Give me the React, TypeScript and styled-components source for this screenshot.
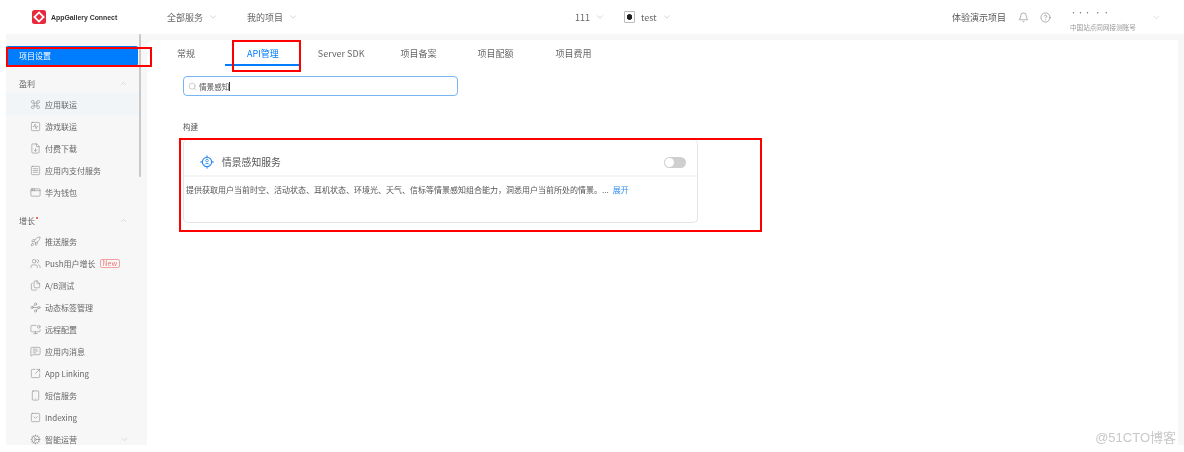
import React from 'react';
import styled, { createGlobalStyle } from 'styled-components';
import {
  AppWindow,
  Bell,
  ChevronDown,
  ChevronUp,
  CircleHelp,
  Command,
  Files,
  FileDown,
  LucideIcon,
  MessageSquareText,
  MonitorDot,
  Rocket,
  Search,
  Smartphone,
  SquareActivity,
  SquareArrowOutUpRight,
  SquareChevronDown,
  SquareMenu,
  Users,
  Waypoints,
  Cog,
} from 'lucide-react';

const FONT = `'Noto Sans CJK SC', 'Noto Sans', sans-serif`;

const GlobalStyle = createGlobalStyle`
  html, body {
    margin: 0;
    padding: 0;
    background: #fff;
    overflow: hidden;
  }
  body {
    font-family: ${FONT};
    color: #555;
  }
`;

interface NavEntry {
  icon: LucideIcon;
  label: string;
  badge?: string;
  active?: boolean;
  caret?: boolean;
}

const profitItems: NavEntry[] = [
  { icon: Command, label: '应用联运', active: true },
  { icon: SquareActivity, label: '游戏联运' },
  { icon: FileDown, label: '付费下载' },
  { icon: SquareMenu, label: '应用内支付服务' },
  { icon: AppWindow, label: '华为钱包' },
];

const growthItems: NavEntry[] = [
  { icon: Rocket, label: '推送服务' },
  { icon: Users, label: 'Push用户增长', badge: 'New' },
  { icon: Files, label: 'A/B测试' },
  { icon: Waypoints, label: '动态标签管理' },
  { icon: MonitorDot, label: '远程配置' },
  { icon: MessageSquareText, label: '应用内消息' },
  { icon: SquareArrowOutUpRight, label: 'App Linking' },
  { icon: Smartphone, label: '短信服务' },
  { icon: SquareChevronDown, label: 'Indexing' },
  { icon: Cog, label: '智能运营', caret: true },
];

const tabs = [
  { label: '常规', gap: 0 },
  { label: 'API管理', gap: 30, active: true },
  { label: 'Server SDK', gap: 17 },
  { label: '项目备案', gap: 36 },
  { label: '项目配额', gap: 41 },
  { label: '项目费用', gap: 42 },
];

const NavRow = ({ item }: { item: NavEntry }) => {
  const Icon = item.icon;
  return (
    <Row $active={item.active}>
      <Icon size={11} strokeWidth={1.2} color="#808080" />
      <RowLabel>{item.label}</RowLabel>
      {item.badge && <Badge>{item.badge}</Badge>}
      {item.caret && <RowCaret><ChevronDown size={9} strokeWidth={1} /></RowCaret>}
    </Row>
  );
};

const App = () => (
  <Page>
    <GlobalStyle />
    <Header>
      <Brand>
        <Logo viewBox="0 0 14 14">
          <rect width="14" height="14" rx="2.5" fill="#e8293b" />
          <path d="M7 2.4 11.6 7 7 11.6 2.4 7Z" fill="none" stroke="#fff" strokeWidth="1.8" />
        </Logo>
        <BrandName>AppGallery Connect</BrandName>
      </Brand>
      <MainMenu>
        <MenuItem>全部服务<ChevronDown size={10} strokeWidth={1} /></MenuItem>
        <MenuItem>我的项目<ChevronDown size={10} strokeWidth={1} /></MenuItem>
      </MainMenu>
      <ProjectMenu>
        <MenuItem>111<ChevronDown size={10} strokeWidth={1} /></MenuItem>
        <MenuItem>
          <ProjectIcon />
          test
          <ChevronDown size={10} strokeWidth={1} />
        </MenuItem>
      </ProjectMenu>
      <Actions>
        <DemoLink>体验演示项目</DemoLink>
        <Bell size={11} strokeWidth={1} />
        <CircleHelp size={11} strokeWidth={1} />
        <Account>
          <AccountTop>··· &nbsp;· ·</AccountTop>
          <AccountName>中国站点同网接测账号</AccountName>
        </Account>
        <ChevronDown size={9} strokeWidth={1} />
      </Actions>
    </Header>
    <Body>
      <Sidebar>
        <Selected>项目设置</Selected>
        <Group>
          盈利
          <ChevronUp size={9} strokeWidth={1} />
        </Group>
        {profitItems.map(item => <NavRow key={item.label} item={item} />)}
        <Group $spaced>
          <span>增长<Dot /></span>
          <ChevronUp size={9} strokeWidth={1} />
        </Group>
        {growthItems.map(item => <NavRow key={item.label} item={item} />)}
        <ScrollThumb />
      </Sidebar>
      <Main>
        <Tabs>
          {tabs.map(tab => (
            <Tab key={tab.label} $active={tab.active} $gap={tab.gap}>{tab.label}</Tab>
          ))}
        </Tabs>
        <SearchBox>
          <Search size={9} strokeWidth={1.2} color="#999" />
          <SearchText>情景感知</SearchText>
          <Caret />
        </SearchBox>
        <SectionTitle>构建</SectionTitle>
        <Card>
          <CardHead>
            <CardIcon viewBox="0 0 14 14">
              <circle cx="7" cy="7" r="4.6" fill="none" stroke="#2f8cf0" strokeWidth="1.2" />
              <circle cx="7" cy="5.6" r="1.3" fill="none" stroke="#2f8cf0" strokeWidth=".8" />
              <path d="M4.8 9.6c.5-1.6 3.9-1.6 4.4 0" fill="none" stroke="#2f8cf0" strokeWidth=".8" />
              <path d="M7 .4v1.4M7 12.2v1.4M.4 7h1.4M12.2 7h1.4" stroke="#2f8cf0" strokeWidth="1.4" />
            </CardIcon>
            <CardTitle>情景感知服务</CardTitle>
            <Toggle />
          </CardHead>
          <CardBody>
            提供获取用户当前时空、活动状态、耳机状态、环境光、天气、信标等情景感知组合能力，洞悉用户当前所处的情景。...
            <More>展开</More>
          </CardBody>
        </Card>
      </Main>
    </Body>
    <Marker $left={6} $top={47} $width={146} $height={20} />
    <Marker $left={232} $top={40} $width={69} $height={32} />
    <Marker $left={179} $top={138} $width={583} $height={94} />
    <Watermark>@51CTO博客</Watermark>
  </Page>
);

const Page = styled.div`
  position: relative;
  width: 1184px;
  height: 452px;
  overflow: hidden;
  background: #fff;
  filter: blur(0.3px);
`;

const Header = styled.header`
  display: flex;
  align-items: center;
  height: 34px;
  padding: 0 23px 0 32px;
  box-sizing: border-box;
  font-size: 9px;
  color: #555;
`;

const Brand = styled.div`
  display: flex;
  align-items: center;
  gap: 5px;
  width: 135px;
`;

const Logo = styled.svg`
  width: 14px;
  height: 14px;
`;

const BrandName = styled.span`
  font-family: 'Liberation Sans', sans-serif;
  font-size: 6.9px;
  font-weight: 700;
  color: #333;
`;

const MainMenu = styled.nav`
  display: flex;
  gap: 29px;
  width: 408px;
`;

const MenuItem = styled.div`
  display: flex;
  align-items: center;
  gap: 5px;
  color: #666;

  svg {
    color: #999;
  }
`;

const ProjectMenu = styled.nav`
  display: flex;
  gap: 19px;
`;

const ProjectIcon = styled.span`
  display: inline-block;
  width: 11px;
  height: 12px;
  margin-right: 1px;
  box-sizing: border-box;
  border: 1px solid #bbb;
  border-radius: 1px;
  background: radial-gradient(circle, #222 0 2.6px, #fff 3px);
`;

const Actions = styled.div`
  display: flex;
  align-items: center;
  margin-left: auto;
  gap: 11px;

  svg {
    color: #555;
  }

  svg:last-child {
    color: #aaa;
    margin-left: 3px;
  }
`;

const DemoLink = styled.span`
  margin-right: 1px;
`;

const Account = styled.div`
  display: flex;
  flex-direction: column;
  width: 68px;
  margin-left: 8px;
  padding-top: 5px;
`;

const AccountTop = styled.span`
  font-size: 7px;
  line-height: 8px;
  height: 15px;
  color: #777;
`;

const AccountName = styled.span`
  font-size: 6.6px;
  line-height: 9px;
  color: #999;
  white-space: nowrap;
`;

const Body = styled.div`
  display: flex;
  height: 411px;
  margin-left: 6px;
  background: #f7f7f7;
  overflow: hidden;
`;

const Sidebar = styled.aside`
  position: relative;
  flex: 0 0 141px;
  padding-top: 12px;
  overflow: hidden;
  font-size: 8px;
`;

const Selected = styled.div`
  display: flex;
  align-items: center;
  width: 119px;
  height: 19px;
  padding-left: 13px;
  padding-bottom: 1px;
  border-radius: 2px;
  background: #007dff;
  color: #fff;
`;

const Group = styled.div<{ $spaced?: boolean }>`
  display: flex;
  align-items: center;
  justify-content: space-between;
  width: 132px;
  height: ${p => (p.$spaced ? '20px' : '19px')};
  padding: 0 10px 0 13px;
  box-sizing: border-box;
  margin-top: ${p => (p.$spaced ? '7px' : '8px')};
  color: #666;

  svg {
    color: #aaa;
  }
`;

const Dot = styled.i`
  display: inline-block;
  width: 2px;
  height: 2px;
  margin-left: 1px;
  border-radius: 50%;
  background: #e84026;
  vertical-align: 5px;
`;

const Row = styled.div<{ $active?: boolean }>`
  display: flex;
  align-items: center;
  width: 132px;
  height: 22px;
  padding-left: 24px;
  box-sizing: border-box;
  background: ${p => (p.$active ? '#f2f5f8' : 'transparent')};
`;

const RowLabel = styled.span`
  margin-left: 4px;
  color: #666;
  white-space: nowrap;
`;

const RowCaret = styled.span`
  display: flex;
  margin-left: auto;
  margin-right: 9px;
  color: #aaa;
`;

const Badge = styled.span`
  margin-left: 4px;
  padding: 0 2px;
  border: 1px solid #f4a0a0;
  border-radius: 2px;
  font-size: 7px;
  line-height: 7px;
  color: #ee7777;
`;

const ScrollThumb = styled.div`
  position: absolute;
  top: 0;
  left: 133px;
  width: 2px;
  height: 143px;
  border-radius: 1px;
  background: #c9c9c9;
`;

const Main = styled.main`
  flex: 1;
  margin: 6px 6px 0 0;
  padding-left: 36px;
  border-radius: 6px 0 0 0;
  background: #fff;
`;

const Tabs = styled.div`
  display: flex;
  margin-left: -6px;
  font-size: 9px;
`;

const Tab = styled.div<{ $active?: boolean; $gap: number }>`
  display: flex;
  align-items: center;
  height: 22px;
  padding: 2px ${p => (p.$active ? '22px' : '0')} 0;
  margin-left: ${p => p.$gap}px;
  color: ${p => (p.$active ? '#007dff' : '#666')};
  border-bottom: 2px solid ${p => (p.$active ? '#007dff' : 'transparent')};
  white-space: nowrap;
`;

const SearchBox = styled.div`
  display: flex;
  align-items: center;
  width: 275px;
  height: 20px;
  margin-top: 10px;
  padding-left: 4px;
  box-sizing: border-box;
  border: 1.5px solid #77b5f5;
  border-radius: 4px;
`;

const SearchText = styled.span`
  margin-left: 2px;
  font-size: 7.6px;
  color: #555;
`;

const Caret = styled.i`
  width: 1px;
  height: 9px;
  background: #333;
`;

const SectionTitle = styled.div`
  margin-top: 25px;
  font-size: 7.6px;
  line-height: 12px;
  color: #555;
`;

const Card = styled.section`
  width: 515px;
  height: 84px;
  margin-top: 6px;
  box-sizing: border-box;
  border: 1px solid #e4e4e4;
  border-top-color: #f0f0f0;
  border-radius: 5px;
`;

const CardHead = styled.div`
  display: flex;
  align-items: center;
  height: 26px;
  padding: 9px 11px 0 16px;
  border-bottom: 2px solid #f4f4f4;
`;

const CardIcon = styled.svg`
  width: 14px;
  height: 14px;
`;

const CardTitle = styled.span`
  margin-left: 8px;
  font-size: 9.8px;
  color: #555;
`;

const Toggle = styled.span`
  position: relative;
  width: 22px;
  height: 11px;
  margin-left: auto;
  border-radius: 6px;
  background: #cfcfcf;

  &::before {
    content: '';
    position: absolute;
    top: 1px;
    left: 1px;
    width: 9px;
    height: 9px;
    border-radius: 50%;
    background: #fff;
  }
`;

const CardBody = styled.p`
  margin: 6px 0 0;
  padding-left: 2px;
  font-size: 8px;
  line-height: 14px;
  color: #555;
  white-space: nowrap;
`;

const More = styled.span`
  margin-left: 4px;
  color: #2f8cf0;
`;

const Marker = styled.div<{ $left: number; $top: number; $width: number; $height: number }>`
  position: absolute;
  left: ${p => p.$left}px;
  top: ${p => p.$top}px;
  width: ${p => p.$width}px;
  height: ${p => p.$height}px;
  box-sizing: border-box;
  border: 2px solid #f00;
`;

const Watermark = styled.div`
  position: absolute;
  right: 8px;
  bottom: 7px;
  font-family: 'Liberation Sans', 'Noto Sans CJK SC', sans-serif;
  font-size: 13px;
  line-height: 15px;
  color: #c8c8c8;
`;

export default App;
